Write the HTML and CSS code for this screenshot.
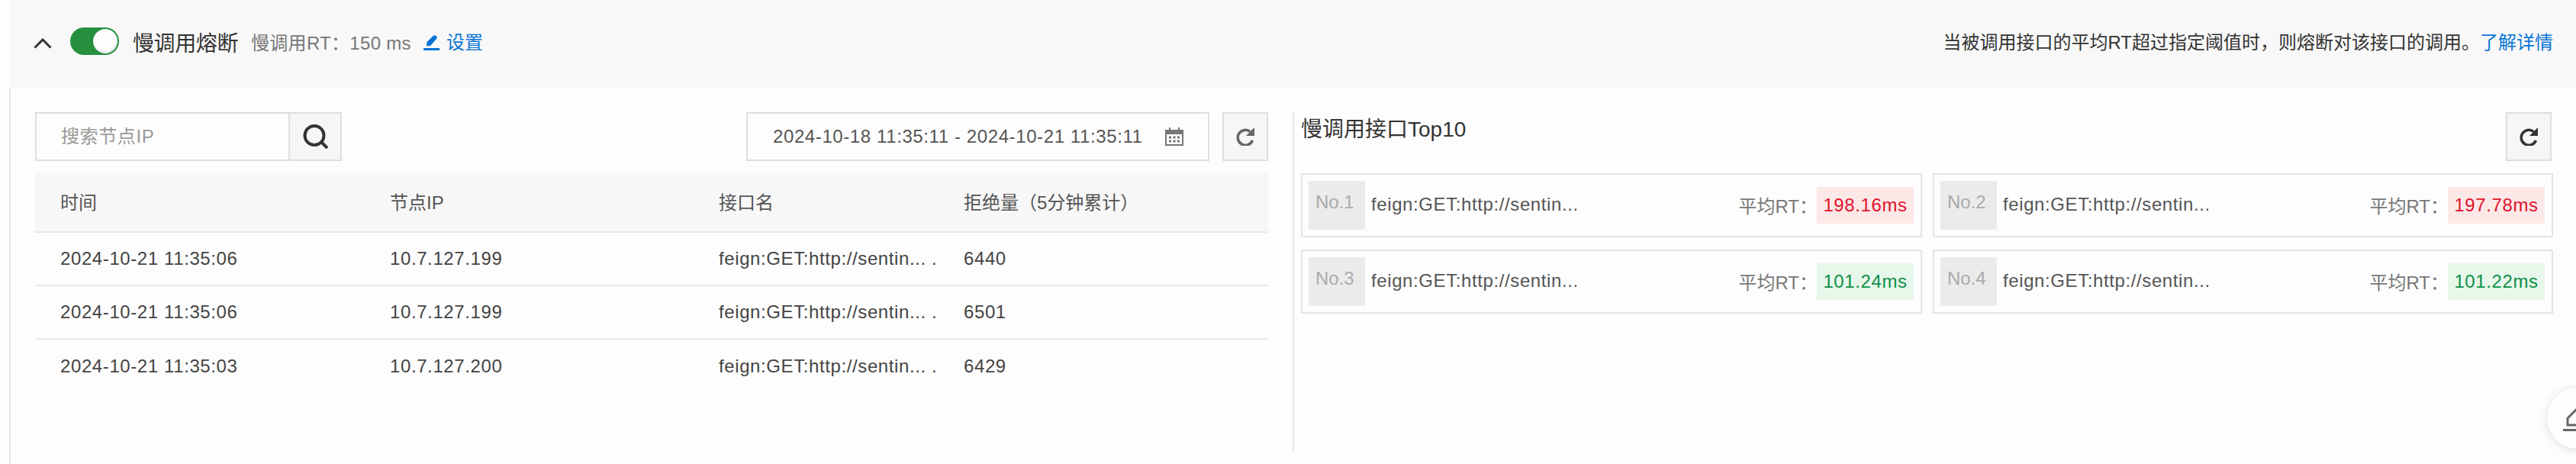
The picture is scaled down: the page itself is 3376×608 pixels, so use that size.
FILE: index.html
```html
<!DOCTYPE html>
<html lang="en">
 <head>
  <meta charset="UTF-8" />
  <title>慢调用熔断</title>
  <link rel="stylesheet" href="styles.css">
 </head>
 <body>
  <div class="section">
   <header class="head">
    <div class="head-left">
     <svg class="chevron" viewBox="0 0 24 14"><path d="M1.5 12.5 L12 2 L22.5 12.5" /></svg>
     <span class="toggle"><span class="knob"></span></span>
     <span class="title">慢调用熔断</span>
     <span class="sub">慢调用RT：150 ms</span>
     <a class="edit">
      <svg class="pen" viewBox="0 0 21 20"><path d="M4 14.5 L4.5 9 L13 0.8 Q15 -0.5 17 1.5 Q18.5 3.5 17 5 L9 14 Z" /><rect x="0" y="17" width="21" height="3" /></svg>
      设置
     </a>
    </div>
    <div class="hint">当被调用接口的平均RT超过指定阈值时，则熔断对该接口的调用。<a class="link">了解详情</a></div>
   </header>

   <div class="content">
    <div class="left">
     <div class="toolbar">
      <div class="search">
       <div class="search-input">搜索节点IP</div>
       <div class="search-btn">
        <svg class="icon-search" viewBox="0 0 33 32"><circle cx="15" cy="14.5" r="12.5" /><path d="M24 23 L32 31" /></svg>
       </div>
      </div>
      <div class="toolbar-right">
       <div class="date">
        <span>2024-10-18 11:35:11 - 2024-10-21 11:35:11</span>
        <svg class="calendar" viewBox="0 0 24 24">
         <path class="cal-head" d="M0 3 H5 V0 H7 V3 H17 V0 H19 V3 H24 V9 H0 Z" />
         <path class="cal-body" d="M1 8 V23 H23 V8" />
         <path class="cal-dots" d="M5 13 h3 M10.5 13 h3 M16 13 h3 M5 18 h3 M10.5 18 h3 M16 18 h3" />
        </svg>
       </div>
       <div class="refresh">
        <svg class="icon-refresh" viewBox="0 0 24 24"><path d="M18.5 5.5 A10 10 0 1 0 21.5 17" /><path class="fill" d="M24 0 V11 H13 Z" /></svg>
       </div>
      </div>
     </div>
     <div class="table">
      <div class="row row-head">
       <div>时间</div><div>节点IP</div><div>接口名</div><div>拒绝量（5分钟累计）</div>
      </div>
      <div class="row">
       <div>2024-10-21 11:35:06</div><div>10.7.127.199</div><div>feign:GET:http://sentin... .</div><div>6440</div>
      </div>
      <div class="row">
       <div>2024-10-21 11:35:06</div><div>10.7.127.199</div><div>feign:GET:http://sentin... .</div><div>6501</div>
      </div>
      <div class="row row-last">
       <div>2024-10-21 11:35:03</div><div>10.7.127.200</div><div>feign:GET:http://sentin... .</div><div>6429</div>
      </div>
     </div>
    </div>

    <div class="right">
     <div class="right-top">
      <div class="right-title">慢调用接口Top10</div>
      <div class="refresh">
       <svg class="icon-refresh dark" viewBox="0 0 24 24"><path d="M18.5 5.5 A10 10 0 1 0 21.5 17" /><path class="fill" d="M24 0 V11 H13 Z" /></svg>
      </div>
     </div>
     <div class="cards">
      <div class="card">
       <div class="no">No.1</div>
       <div class="api">feign:GET:http://sentin...</div>
       <div class="rt">平均RT：</div>
       <div class="tag tag-red">198.16ms</div>
      </div>
      <div class="card">
       <div class="no">No.2</div>
       <div class="api">feign:GET:http://sentin...</div>
       <div class="rt">平均RT：</div>
       <div class="tag tag-red">197.78ms</div>
      </div>
      <div class="card">
       <div class="no">No.3</div>
       <div class="api">feign:GET:http://sentin...</div>
       <div class="rt">平均RT：</div>
       <div class="tag tag-green">101.24ms</div>
      </div>
      <div class="card">
       <div class="no">No.4</div>
       <div class="api">feign:GET:http://sentin...</div>
       <div class="rt">平均RT：</div>
       <div class="tag tag-green">101.22ms</div>
      </div>
     </div>
    </div>
   </div>
  </div>

  <div class="fab">
   <svg class="fab-pen" viewBox="0 0 40 32"><path d="M19 1 L6 14 V23 H19" /><rect x="0" y="28" width="40" height="3" /></svg>
  </div>
 </body>
</html>
```

FILE: styles.css
```css
body {
 margin: 0;
 width: 3376px;
 height: 608px;
 overflow: hidden;
 background-color: #fdfdfd;
 color: #333;
 font-family: "Liberation Sans", "Noto Sans CJK SC", sans-serif;
 font-size: 24px;
 letter-spacing: 0.6px;
}
.section {
 margin-left: 12px;
 height: 608px;
}
.head {
 display: flex;
 justify-content: space-between;
 align-items: center;
 height: 115px;
 padding: 0 30px 8px 32px;
 box-sizing: border-box;
 background-color: #f8f8f8;
}
.head-left {
 display: flex;
 align-items: center;
}
.chevron {
 width: 24px;
 height: 14px;
 margin-top: 6px;
 fill: none;
 stroke: #333;
 stroke-width: 3;
}
.toggle {
 display: flex;
 justify-content: flex-end;
 width: 64px;
 height: 36px;
 margin-left: 24px;
 box-sizing: border-box;
 padding: 2px;
 border-radius: 18px;
 background-color: #26903f;
}
.knob {
 width: 32px;
 height: 32px;
 border-radius: 50%;
 background-color: #fdfdfd;
 box-shadow: inset -1px -3px 3px rgba(0, 0, 0, 0.08);
}
.title {
 margin-left: 18px;
 padding-top: 2px;
 font-size: 28px;
 letter-spacing: -0.4px;
 color: #333;
}
.sub {
 margin-left: 17px;
 padding-top: 2px;
 color: #777;
 letter-spacing: 0.3px;
}
.edit {
 display: flex;
 align-items: center;
 margin-left: 16px;
 color: #0a74d6;
 letter-spacing: 0;
}
.pen {
 width: 21px;
 height: 20px;
 margin: 4px 9px 0 0;
 fill: #0a74d6;
}
.hint {
 color: #333;
 letter-spacing: 0;
}
.link {
 color: #0a74d6;
}
.content {
 display: flex;
 height: 493px;
 box-sizing: border-box;
 padding: 32px 0 16px 32px;
 border-left: 2px solid #e5e5e5;
}
.left {
 width: 1616px;
}
.toolbar {
 display: flex;
 justify-content: space-between;
}
.search {
 display: flex;
 width: 402px;
 height: 64px;
 box-sizing: border-box;
 border: 2px solid #dedede;
}
.search-input {
 flex: 1;
 padding-left: 32px;
 line-height: 60px;
 color: #999;
}
.search-btn {
 display: flex;
 align-items: center;
 justify-content: center;
 width: 66px;
 background-color: #f6f6f6;
 border-left: 2px solid #dedede;
}
.icon-search {
 width: 33px;
 height: 32px;
 fill: none;
 stroke: #333;
 stroke-width: 4;
}
.toolbar-right {
 display: flex;
 gap: 17px;
}
.date {
 display: flex;
 justify-content: space-between;
 align-items: center;
 width: 607px;
 height: 64px;
 box-sizing: border-box;
 padding: 0 32px 0 33px;
 border: 2px solid #dedede;
 color: #555;
}
.calendar {
 width: 24px;
 height: 24px;
 fill: none;
}
.cal-head {
 fill: #777;
}
.cal-body {
 stroke: #777;
 stroke-width: 2;
}
.cal-dots {
 stroke: #777;
 stroke-width: 3;
}
.refresh {
 display: flex;
 align-items: center;
 justify-content: center;
 width: 60px;
 height: 64px;
 box-sizing: border-box;
 background-color: #f6f6f6;
 border: 2px solid #dedede;
}
.icon-refresh {
 width: 24px;
 height: 24px;
 fill: none;
 stroke: #666;
 stroke-width: 3.5;
}
.icon-refresh .fill {
 fill: #666;
 stroke: none;
}
.icon-refresh.dark {
 stroke: #333;
}
.icon-refresh.dark .fill {
 fill: #333;
}
.table {
 margin-top: 16px;
}
.row {
 display: grid;
 grid-template-columns: 432px 431px 321px 1fr;
 align-items: center;
 height: 70px;
 padding-left: 33px;
 border-bottom: 2px solid #e8e8e8;
 box-sizing: border-box;
 color: #444;
}
.row-head {
 height: 78px;
 padding-bottom: 3px;
 background-color: #f7f7f7;
 color: #555;
 letter-spacing: 0;
}
.row-last {
 border-bottom: none;
}
.right {
 width: 1650px;
 margin-left: 32px;
 padding-left: 9px;
 box-sizing: border-box;
 border-left: 2px solid #e5e5e5;
}
.right-top {
 display: flex;
 justify-content: space-between;
}
.right-title {
 font-size: 28px;
 letter-spacing: 0;
 color: #333;
}
.cards {
 display: grid;
 grid-template-columns: 814px 813px;
 gap: 16px 14px;
 margin-top: 16px;
}
.card {
 display: flex;
 align-items: center;
 height: 84px;
 box-sizing: border-box;
 padding: 0 9px 0 8px;
 border: 2px solid #e4e4e4;
}
.no {
 width: 74px;
 height: 64px;
 box-sizing: border-box;
 padding: 0 0 6px 9px;
 line-height: 56px;
 background-color: #ebebeb;
 color: #aaa;
 letter-spacing: 0;
}
.api {
 flex: 1;
 margin-left: 8px;
 padding-bottom: 2px;
 color: #555;
}
.rt {
 margin-right: -1px;
 padding-bottom: 2px;
 color: #777;
 letter-spacing: 0;
}
.tag {
 width: 127px;
 height: 48px;
 line-height: 48px;
 text-align: center;
}
.tag-red {
 background-color: #fde8e8;
 color: #e0122a;
}
.tag-green {
 background-color: #e7f7ea;
 color: #0e8f49;
}
.fab {
 position: absolute;
 left: 3338px;
 top: 508px;
 width: 80px;
 height: 80px;
 border-radius: 50%;
 background-color: #fdfdfd;
 box-shadow: 0 2px 12px rgba(0, 0, 0, 0.12);
}
.fab-pen {
 position: absolute;
 left: 21px;
 top: 26px;
 width: 40px;
 height: 32px;
 fill: #666;
}
.fab-pen path {
 fill: none;
 stroke: #666;
 stroke-width: 3;
}
```
